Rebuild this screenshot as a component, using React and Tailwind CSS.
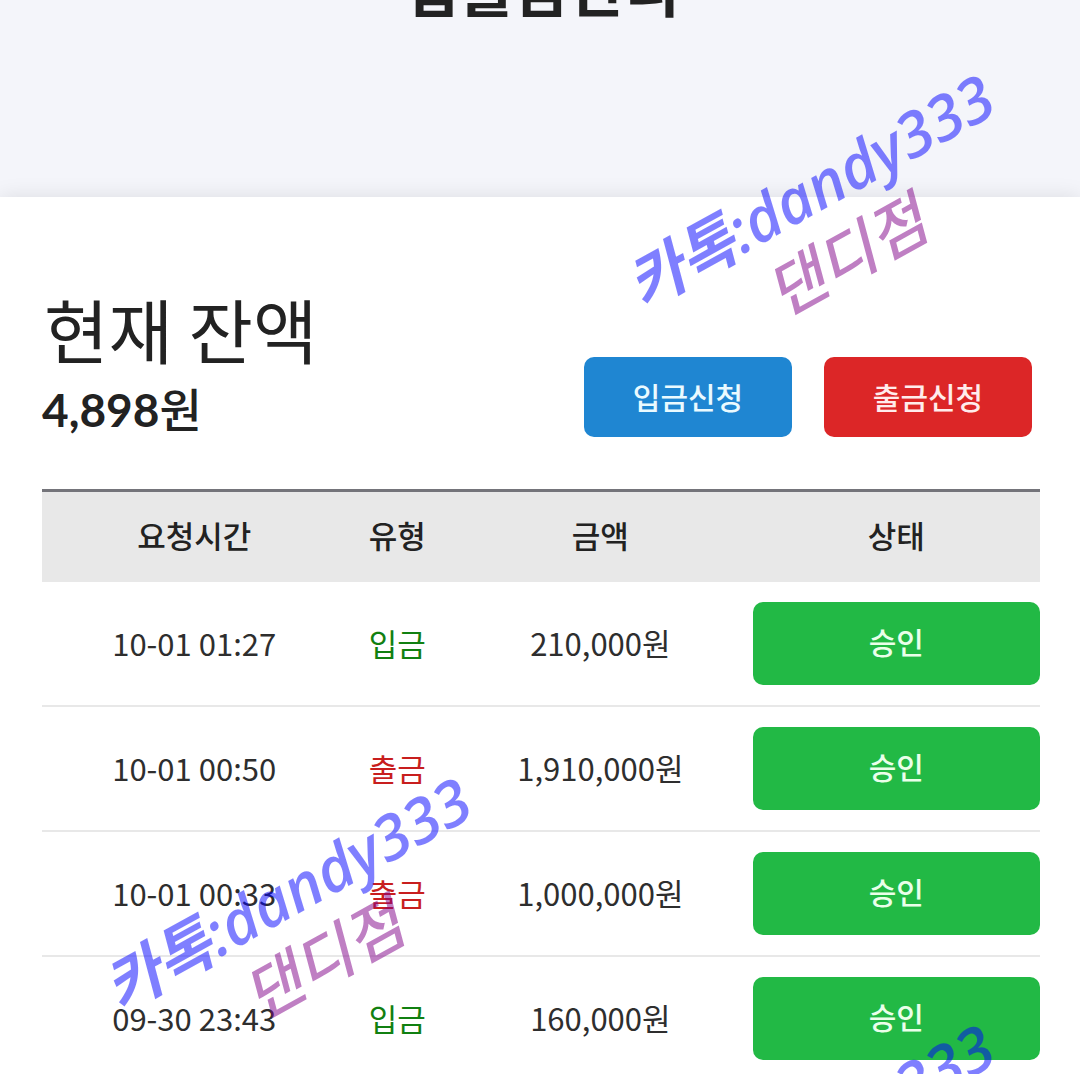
const requests = [
  { time: '10-01 01:27', type: '입금', amount: '210,000원' },
  { time: '10-01 00:50', type: '출금', amount: '1,910,000원' },
  { time: '10-01 00:33', type: '출금', amount: '1,000,000원' },
  { time: '09-30 23:43', type: '입금', amount: '160,000원' },
];

function Watermark({ place }) {
  return (
    <div
      aria-hidden="true"
      className={`pointer-events-none absolute -translate-x-1/2 -translate-y-1/2 -rotate-29 text-center text-[62px] leading-[75px] whitespace-nowrap italic font-['Open_Sans','Noto_Sans_CJK_KR',sans-serif] ${place}`}
    >
      <div className="font-semibold text-[#0000ff]/50">카톡:dandy333</div>
      <div className="font-medium text-[#800088]/50">댄디점</div>
    </div>
  );
}

function RequestRow({ time, type, amount }) {
  return (
    <tr className="border-b-2 border-[#e8e8e8] last:border-b-0">
      <td>{time}</td>
      <td className={type === '입금' ? 'text-[#118011]' : 'text-[#c81e1e]'}>{type}</td>
      <td>{amount}</td>
      <td className="py-5">
        <button type="button" className="block h-[83px] w-full rounded-[10px] bg-[#22b945] pb-1 text-[30px] font-medium text-[#eaffea]">
          승인
        </button>
      </td>
    </tr>
  );
}

export default function App() {
  return (
    <div className="relative h-screen overflow-hidden bg-[#f4f5fa] text-[#222222] font-['Noto_Sans_CJK_KR',sans-serif]">
      <header className="flex h-[197px] items-start justify-center">
        <h1 className="-mt-[54px] pl-1 text-[60px] leading-[80px] font-bold">입출금관리</h1>
      </header>

      <main className="bg-white pr-10 pl-[42px] pt-[90px] shadow-[0_0_20px_rgba(0,0,0,0.1)]">
        <section className="flex items-end justify-between pr-2">
          <div>
            <h2 className="pl-0.5 text-[70px] leading-[84px]">현재 잔액</h2>
            <p className="pt-1 text-[46px] leading-[70px] font-bold font-['Lato','Noto_Sans_CJK_KR',sans-serif]">
              4,898<span className="font-medium">원</span>
            </p>
          </div>
          <div className="mb-2 flex gap-8">
            <button type="button" className="h-20 w-52 rounded-[10px] bg-[#1f86d2] pb-0.5 text-[30px] font-medium text-[#eafaff]">입금신청</button>
            <button type="button" className="h-20 w-52 rounded-[10px] bg-[#dc2627] pb-0.5 text-[30px] font-medium text-[#ffecec]">출금신청</button>
          </div>
        </section>

        <table className="mt-11 w-full table-fixed border-collapse text-center text-[31px] leading-[44px]">
          <colgroup>
            <col className="w-[30.5%]" />
            <col className="w-[10.2%]" />
            <col className="w-[30.5%]" />
            <col className="w-[28.8%]" />
          </colgroup>
          <thead>
            <tr className="h-[91px] border-t-[3px] border-[#74747a] bg-[#e8e8e8]">
              <th className="pb-1 font-medium">요청시간</th>
              <th className="pb-1 font-medium">유형</th>
              <th className="pb-1 font-medium">금액</th>
              <th className="pb-1 font-medium">상태</th>
            </tr>
          </thead>
          <tbody className="text-[#2e2e2e]">
            {requests.map((r) => (
              <RequestRow key={r.time} {...r} />
            ))}
          </tbody>
        </table>
      </main>

      <Watermark place="left-[828px] top-[223px]" />
      <Watermark place="left-[305px] top-[926px]" />
      <Watermark place="left-[828px] top-[1173px]" />
    </div>
  );
}
